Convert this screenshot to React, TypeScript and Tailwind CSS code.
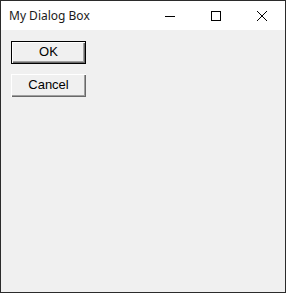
export default function App() {
  const bevel =
    "shadow-[inset_1px_1px_#ffffff,inset_-1px_-1px_#696969,inset_-2px_-2px_#a0a0a0]";

  return (
    <div className="w-[286px] h-[293px] border border-[#2b2b2b] bg-[#f0f0f0] flex flex-col">
      {/* title bar */}
      <div className="h-[29px] bg-white flex items-center">
        <span className="pl-[8px] flex-1 text-[12px] text-[#1a1a1a] font-['Segoe_UI','Noto_Sans',sans-serif] leading-none">
          My Dialog Box
        </span>
        <div className="w-[46px] h-full flex items-center justify-center">
          <svg width="10" height="10" viewBox="0 0 10 10">
            <path d="M0 5.5h10" stroke="#000" strokeWidth="1" />
          </svg>
        </div>
        <div className="w-[46px] h-full flex items-center justify-center">
          <svg width="10" height="10" viewBox="0 0 10 10">
            <rect x="0.5" y="0.5" width="9" height="9" fill="none" stroke="#000" strokeWidth="1" />
          </svg>
        </div>
        <div className="w-[46px] h-full flex items-center justify-center">
          <svg width="10" height="10" viewBox="0 0 10 10">
            <path d="M0 0L10 10M10 0L0 10" stroke="#000" strokeWidth="1" />
          </svg>
        </div>
      </div>

      {/* content */}
      <div className="flex-1 pl-[10px] pt-[11px] flex flex-col items-start gap-[10px] font-['Liberation_Sans',Arial,sans-serif] text-[13px] text-black">
        <button className="w-[75px] h-[23px] border border-black bg-[#f0f0f0] p-0">
          <div className={`w-full h-full flex items-center justify-center pb-[2px] ${bevel}`}>OK</div>
        </button>
        <button className={`w-[75px] h-[23px] bg-[#f0f0f0] flex items-center justify-center pb-[2px] ${bevel}`}>
          Cancel
        </button>
      </div>
    </div>
  );
}
